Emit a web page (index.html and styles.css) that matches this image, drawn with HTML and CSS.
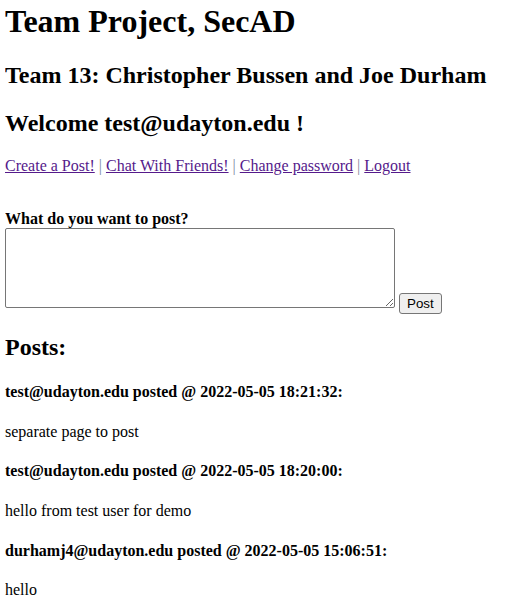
FILE: index.html
```html
<!DOCTYPE html>
<html>
<head>
<meta charset="utf-8">
<title>Team Project, SecAD</title>
<link rel="stylesheet" href="styles.css">
</head>
<body>
<h1 class="title">Team Project, SecAD</h1>
<h2 class="sub">Team 13: Christopher Bussen and Joe Durham</h2>
<h2 class="sub">Welcome test@udayton.edu !</h2>
<p class="nav"><a href="#">Create a Post!</a> <span class="sep">|</span> <a href="#">Chat With Friends!</a> <span class="sep">|</span> <a href="#">Change password</a> <span class="sep">|</span> <a href="#">Logout</a></p>
<form class="post-form">
<label class="post-label" for="content">What do you want to post?</label><br>
<textarea id="content" class="post-input"></textarea> <button type="button" class="post-btn">Post</button>
</form>
<h2 class="sub">Posts:</h2>
<h4 class="post-head">test@udayton.edu posted @ 2022-05-05 18:21:32:</h4>
<p class="post-body">separate page to post</p>
<h4 class="post-head">test@udayton.edu posted @ 2022-05-05 18:20:00:</h4>
<p class="post-body">hello from test user for demo</p>
<h4 class="post-head">durhamj4@udayton.edu posted @ 2022-05-05 15:06:51:</h4>
<p class="post-body">hello</p>
</body>
</html>
```
FILE: styles.css
```css
html {
  background: #fff;
}
body {
  margin: 0 0 0 5px;
  padding-top: 3px;
  font-family: "Liberation Serif", "Times New Roman", serif;
  font-size: 16px;
  line-height: 1.15;
  color: #000;
}
.title {
  font-size: 32px;
  font-weight: bold;
  margin: 0 0 22.44px;
}
.sub {
  font-size: 24px;
  font-weight: bold;
  margin: 19.92px 0;
}
.nav {
  margin: 16px 0;
}
.nav a {
  color: #551a8b;
  text-decoration: underline;
}
.sep {
  color: #7d8a9c;
}
.post-form {
  margin: 34.4px 0 16px;
}
.post-label {
  font-weight: bold;
}
.post-input {
  box-sizing: border-box;
  width: 390px;
  height: 80px;
  margin: 0;
  border: 1px solid #767676;
  border-radius: 2px;
  font-family: "Liberation Mono", monospace;
  font-size: 13.33px;
  padding: 2px;
}
.post-btn {
  margin: 0;
  padding: 2px 7px;
  border: 1px solid #767676;
  border-radius: 3px;
  background: #efefef;
  color: #000;
  font-family: "Liberation Sans", Arial, sans-serif;
  font-size: 13.333px;
  line-height: normal;
}
.post-head {
  font-size: 16px;
  font-weight: bold;
  margin: 21.28px 0;
}
.post-body {
  margin: 16px 0;
}
```
